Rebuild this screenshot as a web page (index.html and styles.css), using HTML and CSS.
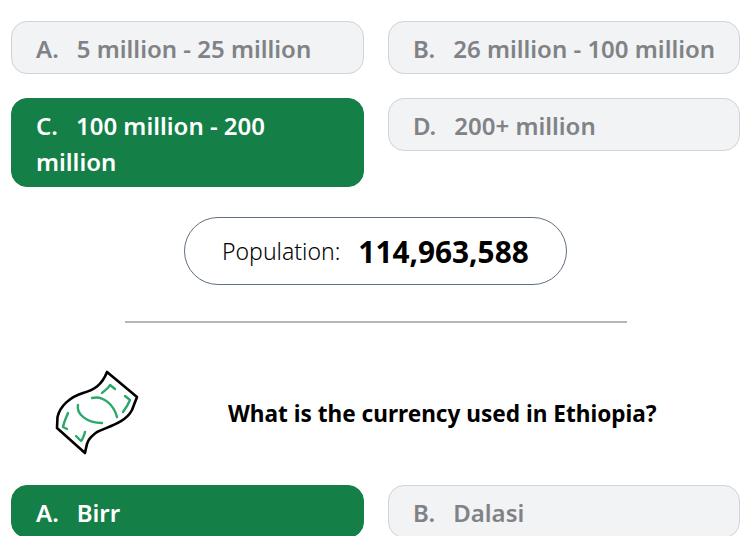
FILE: index.html
```html
<!DOCTYPE html>
<html lang="en">
<head>
<meta charset="utf-8">
<title>Ethiopia quiz</title>
<link rel="stylesheet" href="styles.css">
</head>
<body>
<main class="page">
  <section class="options">
    <div class="option"><span class="letter">A.</span>5 million - 25 million</div>
    <div class="option"><span class="letter">B.</span>26 million - 100 million</div>
    <div class="option correct"><span class="letter">C.</span>100 million - 200 million</div>
    <div class="option"><span class="letter">D.</span>200+ million</div>
  </section>
  <div class="fact">
    <div class="pill"><span class="pill-label">Population:</span><span class="pill-value">114,963,588</span></div>
  </div>
  <hr class="divider">
  <section class="question">
    <svg class="icon" viewBox="0 0 110 100" width="110" height="100" aria-hidden="true">
      <path d="M67 12 C62 25 54 30 43 33 C30 37 20 46 17.500 57 L17 68 L45 93 C47 84 46 80 57 72 C70 66 86 62 92 50 L97 37 Z" fill="#fff" stroke="#000" stroke-width="2.6" stroke-linejoin="round"/>
      <g fill="none" stroke="#2aa86a" stroke-width="2.4" stroke-linecap="round" stroke-linejoin="round">
        <path d="M52 38 C63 35 74 45 77 57"/>
        <path d="M38 45 C36 54 47 63 62 63"/>
        <path d="M62 33 C65 30 68 29 70 25 L75 29"/>
        <path d="M85 36 L90 40 C88 45 86 48 83 52"/>
        <path d="M28 53 C26 58 24 62 23 67 L27 69"/>
        <path d="M36 76 L41 81 C43 79 44 75 45 72"/>
      </g>
    </svg>
    <h2 class="question-text">What is the currency used in Ethiopia?</h2>
  </section>
  <section class="options">
    <div class="option correct"><span class="letter">A.</span>Birr</div>
    <div class="option"><span class="letter">B.</span>Dalasi</div>
  </section>
</main>
</body>
</html>
```
FILE: styles.css
```css
html, body {
  margin: 0;
  height: 536px;
  overflow: hidden;
  background: #fff;
}
body {
  font-family: "Noto Sans", "Open Sans", "Liberation Sans", sans-serif;
  color: #000;
}
.page {
  padding: 21px 9px 0 11px;
}
.options {
  display: grid;
  grid-template-columns: 353px 352px;
  column-gap: 24px;
  row-gap: 24px;
  align-items: start;
}
.option {
  box-sizing: border-box;
  padding: 9px 16px 6px 24px;
  border: 1px solid #ced4da;
  border-radius: 16px;
  background: #f1f3f5;
  color: #808285;
  font-size: 24px;
  font-weight: 600;
  line-height: 36px;
}
.option.correct {
  background: #147f46;
  border-color: #147f46;
  color: #fff;
}
.letter {
  margin-right: 18px;
}
.fact {
  display: flex;
  margin-top: 30px;
  padding-left: 173px;
}
.pill {
  box-sizing: border-box;
  display: flex;
  align-items: center;
  width: 383px;
  height: 68px;
  padding: 0 37px;
  border: 1px solid #5f6f7e;
  border-radius: 34px;
}
.pill-label {
  font-size: 23px;
  font-weight: 300;
  margin-right: 18px;
}
.pill-value {
  font-size: 29.8px;
  font-weight: 700;
}
.divider {
  width: 502px;
  height: 2px;
  margin: 36px 0 0 114px;
  border: 0;
  background: #b4b6b8;
}
.question {
  display: flex;
  align-items: center;
  height: 100px;
  margin-top: 37px;
  padding-left: 29px;
}
.icon {
  flex: none;
}
.question-text {
  margin: 6px 0 0 78px;
  font-size: 22.6px;
  font-weight: 700;
  white-space: nowrap;
}
.question + .options {
  margin-top: 25px;
}
```
